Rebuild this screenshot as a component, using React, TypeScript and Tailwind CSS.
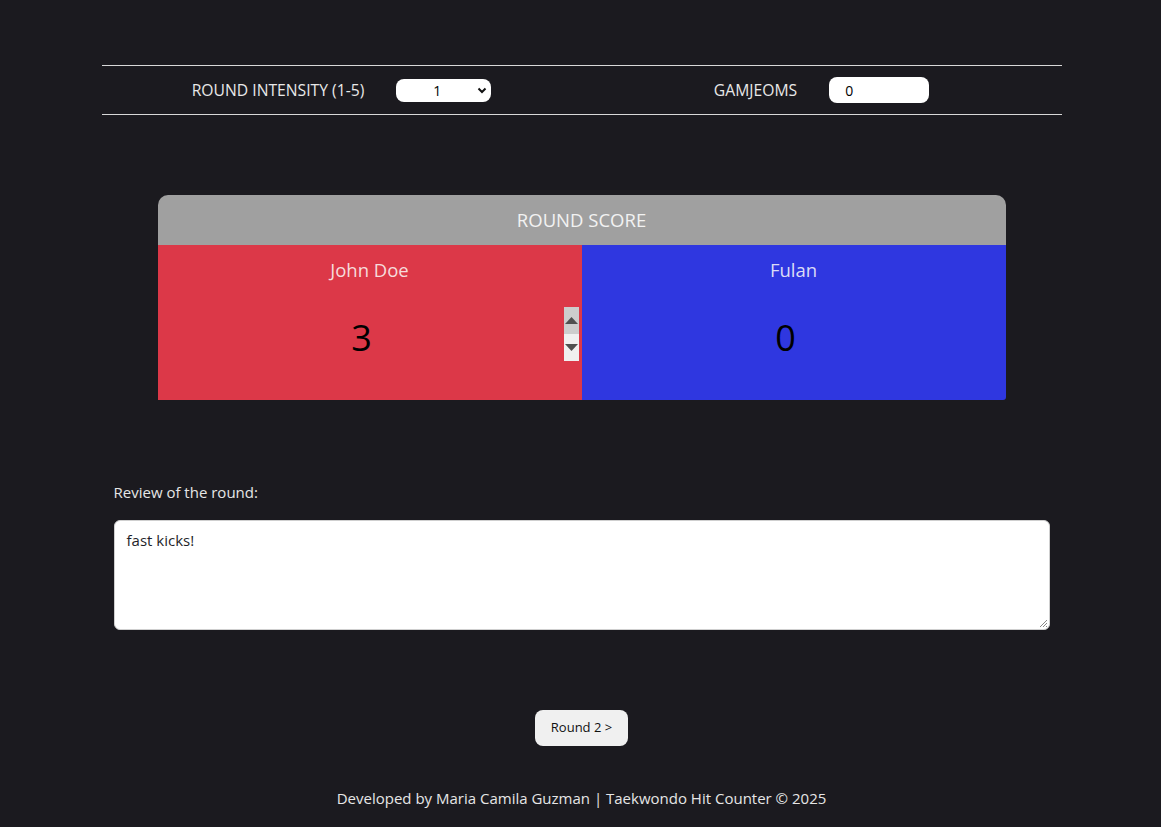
import React from "react";

const font = { fontFamily: '"Open Sans", "Noto Sans", sans-serif' };

function Spinner() {
  return (
    <div className="flex flex-col w-[15px] h-[54px]">
      <div className="flex-1 bg-[#cdcdcd] flex items-center justify-center">
        <svg width="13" height="7" viewBox="0 0 13 7"><path d="M0 7 L6.5 0 L13 7 Z" fill="#505050" /></svg>
      </div>
      <div className="flex-1 bg-[#f0f0f0] flex items-center justify-center">
        <svg width="13" height="7" viewBox="0 0 13 7"><path d="M0 0 L6.5 7 L13 0 Z" fill="#505050" /></svg>
      </div>
    </div>
  );
}

export default function App() {
  return (
    <div className="min-h-[827px] bg-[#1b1a1f] text-[#e6e6e6] pt-[65px] pl-[2px]" style={font}>
      <div className="w-[960px] mx-auto border-y border-[#d8d8d8] h-[50px] flex">
        <div className="w-1/2 flex items-center justify-center gap-8">
          <span className="text-[15.7px] text-[#e8e8e8] pt-[1px]">ROUND INTENSITY (1-5)</span>
          <div className="w-[95px] h-[23px] bg-white rounded-[8px] flex items-center text-black text-[14px] relative">
            <span className="absolute left-[37px]">1</span>
            <svg className="absolute right-[4px]" width="10" height="7" viewBox="0 0 10 7"><path d="M1.5 1.5 L5 5 L8.5 1.5" stroke="#111" strokeWidth="2" fill="none" /></svg>
          </div>
        </div>
        <div className="w-1/2 flex items-center justify-center gap-8">
          <span className="text-[15.7px] text-[#e8e8e8] pt-[1px]">GAMJEOMS</span>
          <div className="w-[100px] h-[26px] bg-white rounded-[8px] flex items-center pl-[16px] text-black text-[14px]">0</div>
        </div>
      </div>

      <div className="w-[848px] mx-auto mt-[80px] rounded-t-[10px] overflow-hidden">
        <div className="h-[50px] bg-[#a0a0a0] flex items-center justify-center text-[18.5px] text-[#f2f2f2]">ROUND SCORE</div>
        <div className="flex h-[155px]">
          <div className="w-1/2 bg-[#dc3848] flex flex-col items-center">
            <div className="mt-[12px] text-[18.5px] text-[#f6dcdc] h-[26px] leading-[26px]">John Doe</div>
            <div className="mt-[24px] w-full flex items-center h-[54px] pl-[2px] pr-[3px]">
              <div className="flex-1 text-center text-[36px] text-black leading-none pt-[8px]">3</div>
              <Spinner />
            </div>
          </div>
          <div className="w-1/2 bg-[#2f37e0] flex flex-col items-center rounded-br-[3px]">
            <div className="mt-[12px] text-[18.5px] text-[#dcdcf6] h-[26px] leading-[26px]">Fulan</div>
            <div className="mt-[24px] w-full flex items-center h-[54px] pl-[2px] pr-[18px]">
              <div className="flex-1 text-center text-[36px] text-black leading-none pt-[8px]">0</div>
            </div>
          </div>
        </div>
      </div>

      <div className="w-[936px] mx-auto mt-[80px]">
        <div className="text-[15px] text-[#e6e6e6] h-[24px] leading-[24px]">Review of the round:</div>
        <div className="mt-[16px] relative h-[110px] bg-white rounded-[6px] border border-[#cfcfcf] px-[12px] py-[8px] text-[15px] text-[#1f1f2a]">
          fast kicks!
          <svg className="absolute right-[1px] bottom-[1px]" width="9" height="9" viewBox="0 0 9 9">
            <path d="M8 1 L1 8 M8 4 L4 8 M8 7 L7 8" stroke="#888" strokeWidth="1" />
          </svg>
        </div>
      </div>

      <div className="flex justify-center mt-[80px]">
        <div className="w-[93px] h-[36px] bg-[#f0f0f0] rounded-[8px] flex items-center justify-center text-[13px] text-[#111] font-medium">Round 2 &gt;</div>
      </div>

      <div className="text-center mt-[41px] text-[15px] text-[#e6e6e6]">Developed by Maria Camila Guzman | Taekwondo Hit Counter © 2025</div>
    </div>
  );
}
